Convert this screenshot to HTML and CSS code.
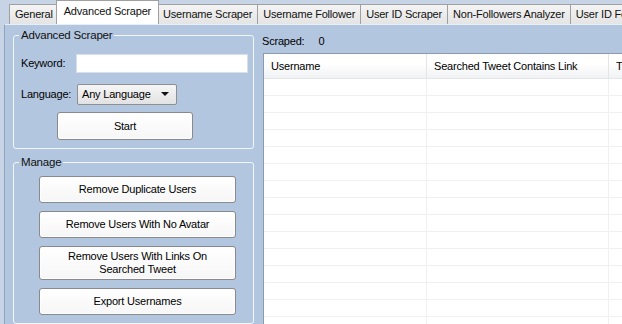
FILE: index.html
```html
<!DOCTYPE html>
<html lang="en">
<head>
    <meta charset="UTF-8">
    <meta name="viewport" content="width=device-width, initial-scale=1.0">
    <title>Advanced Scraper</title>
    <link rel="stylesheet" href="styles.css">
</head>
<body>
    <div class="tabs">
        <div class="tab">General</div>
        <div class="tab active">Advanced Scraper</div>
        <div class="tab">Username Scraper</div>
        <div class="tab">Username Follower</div>
        <div class="tab">User ID Scraper</div>
        <div class="tab">Non-Followers Analyzer</div>
        <div class="tab">User ID Follower Scraper</div>
    </div>

    <div class="page">
        <div class="left">
            <fieldset class="group search-group">
                <legend>Advanced Scraper</legend>
                <div class="field-row">
                    <label for="keyword">Keyword:</label>
                    <input type="text" id="keyword" class="textbox">
                </div>
                <div class="field-row lang-row">
                    <label>Language:</label>
                    <div class="combo">
                        <span>Any Language</span>
                        <span class="arrow"></span>
                    </div>
                </div>
                <button class="btn start-btn">Start</button>
            </fieldset>

            <fieldset class="group manage-group">
                <legend>Manage</legend>
                <button class="btn manage-btn">Remove Duplicate Users</button>
                <button class="btn manage-btn">Remove Users With No Avatar</button>
                <button class="btn manage-btn tall">Remove Users With Links On<br>Searched Tweet</button>
                <button class="btn manage-btn">Export Usernames</button>
            </fieldset>
        </div>

        <div class="right">
            <div class="scraped">
                <span>Scraped:</span>
                <span class="count">0</span>
            </div>
            <div class="grid">
                <div class="grid-head">
                    <div class="col col-user">Username</div>
                    <div class="col col-link">Searched Tweet Contains Link</div>
                    <div class="col col-tweet">Tweet</div>
                </div>
                <div id="gridBody" class="grid-body"></div>
            </div>
        </div>
    </div>

    <script>
        // empty rows so the grid lines show
        const gridBody = document.getElementById("gridBody");
        for (let i = 0; i < 15; i++) {
            const row = document.createElement("div");
            row.className = "grid-row";
            row.innerHTML = '<div class="cell col-user"></div><div class="cell col-link"></div><div class="cell col-tweet"></div>';
            gridBody.appendChild(row);
        }
    </script>
</body>
</html>
```

FILE: styles.css
```css
body {
    margin: 0;
    width: 622px;
    height: 324px;
    overflow: hidden;
    background-color: #c6d4e6;
    font-family: "Liberation Sans", Arial, sans-serif;
    font-size: 11px;
    letter-spacing: -0.2px;
    color: #000;
}
.tabs {
    display: flex;
    align-items: flex-end;
    height: 24px;
    padding-left: 9px;
    white-space: nowrap;
    overflow: hidden;
}
.tab {
    height: 19px;
    line-height: 19px;
    padding: 0 5px;
    background: linear-gradient(#f4f4f4, #e4e4e4);
    border: 1px solid #a0a0a0;
    border-bottom: none;
    margin-right: -1px;
    color: #111;
}
.tab.active {
    height: 23px;
    line-height: 21px;
    background: #fff;
    margin-left: -2px;
    margin-right: -2px;
    padding: 0 7px;
    position: relative;
    z-index: 1;
}
.page {
    display: flex;
    gap: 9px;
    height: 300px;
    margin-left: 4px;
    padding: 3px 0 0 8px;
    background-color: #b3c6df;
    border-left: 1px solid #8fa3be;
    border-top: 1px solid #e8eef6;
    box-sizing: border-box;
}
.left {
    width: 241px;
    flex-shrink: 0;
    display: flex;
    flex-direction: column;
    gap: 6px;
}
.group {
    margin: 0;
    border: 1px solid #f2f6fb;
    border-radius: 3px;
    padding: 0 5px 0 7px;
}
.group legend {
    padding: 0 2px;
    margin-left: -2px;
    line-height: 14px;
    font-size: 11.5px;
    color: #111;
}
.search-group {
    padding-top: 11px;
    padding-bottom: 8px;
}
.field-row {
    display: flex;
    align-items: center;
    height: 20px;
}
.field-row label {
    width: 55px;
    flex-shrink: 0;
}
.lang-row {
    margin-top: 11px;
}
.textbox {
    width: 172px;
    height: 19px;
    box-sizing: border-box;
    border: 1px solid #d8dfe8;
    background: #fff;
    padding: 0;
    margin: 0;
}
.combo {
    display: flex;
    align-items: center;
    justify-content: space-between;
    width: 100px;
    height: 21px;
    box-sizing: border-box;
    margin-left: 1px;
    padding: 0 7px 0 4px;
    border: 1px solid #8e8f8f;
    border-radius: 2px;
    background: linear-gradient(#f6f6f6, #e2e2e2);
}
.arrow {
    width: 0;
    height: 0;
    border-left: 4px solid transparent;
    border-right: 4px solid transparent;
    border-top: 4px solid #111;
}
.btn {
    display: block;
    font-family: inherit;
    font-size: 11px;
    letter-spacing: -0.2px;
    color: #000;
    background: linear-gradient(#ffffff, #f6f6f6);
    border: 1px solid #8a8a8a;
    border-radius: 3px;
    box-shadow: inset 0 0 0 1px #fdfdfd;
    padding: 0;
    line-height: 13px;
}
.start-btn {
    width: 136px;
    height: 28px;
    margin: 8px 0 0 36px;
}
.manage-group {
    flex: 1;
    padding-top: 7px;
}
.manage-btn {
    width: 197px;
    height: 27px;
    margin: 0 0 8px 18px;
}
.manage-btn.tall {
    height: 34px;
}
.right {
    flex: 1;
    display: flex;
    flex-direction: column;
    min-width: 0;
}
.scraped {
    display: flex;
    gap: 14px;
    height: 25px;
    line-height: 26px;
    margin-left: -1px;
}
.grid {
    flex: 1;
    background: #fff;
    border-top: 1px solid #8d9aab;
    border-left: 1px solid #8d9aab;
    overflow: hidden;
}
.grid-head {
    display: flex;
    height: 24px;
    background: linear-gradient(#ffffff 40%, #f1f2f4);
    border-bottom: 1px solid #e3e5e8;
    white-space: nowrap;
}
.col {
    line-height: 24px;
    padding-left: 7px;
    box-sizing: border-box;
    border-right: 1px solid #e3e5e8;
    flex-shrink: 0;
}
.col-user {
    width: 163px;
}
.col-link {
    width: 182px;
}
.col-tweet {
    width: 100px;
}
.grid-row {
    display: flex;
    height: 17px;
    border-bottom: 1px solid #f0f0f0;
    box-sizing: border-box;
}
.cell {
    box-sizing: border-box;
    border-right: 1px solid #f0f0f0;
    flex-shrink: 0;
}
```
